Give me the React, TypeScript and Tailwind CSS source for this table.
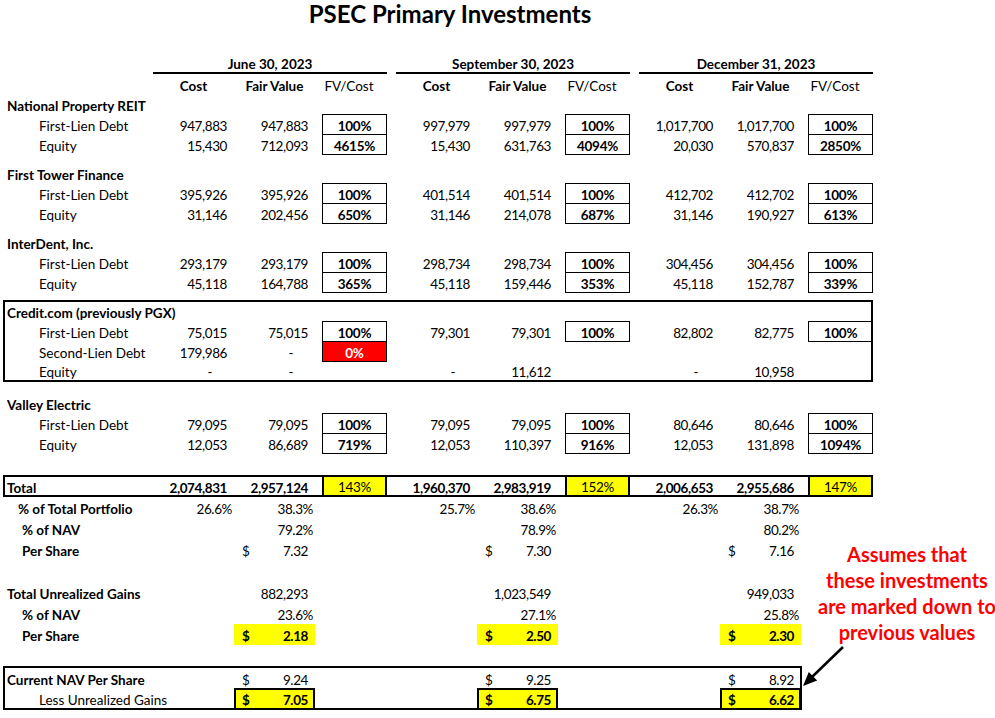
import React from "react";

type GroupData = {
  cost?: string;
  fv?: string;
  ratio?: string;
  red?: boolean;
};

const Sep = () => <div className="w-[9px] shrink-0" />;

function three(fn: (i: number) => React.ReactNode) {
  return (
    <>
      {fn(0)}
      <Sep />
      {fn(1)}
      <Sep />
      {fn(2)}
    </>
  );
}

const NumCell = ({ v, pct, bold }: { v?: string; pct?: boolean; bold?: boolean }) => {
  let pad = "pr-[7px]";
  if (v === "-") pad = "pr-[22px]";
  else if (pct) pad = "pr-[2px]";
  return (
    <div
      className={`w-[81px] shrink-0 flex items-center justify-end whitespace-nowrap pt-[4px] tracking-[-0.4px] ${pad} ${
        bold ? "font-bold" : ""
      }`}
    >
      {v}
    </div>
  );
};

const Ratio = ({ v, red }: { v?: string; red?: boolean }) => {
  if (!v) return <div className="w-[65px] shrink-0" />;
  return (
    <div
      className={`w-[65px] h-[21px] shrink-0 self-start border border-black flex items-center justify-center pt-[3px] font-bold tracking-[-0.3px] ${
        red ? "bg-[#ff0000] text-white" : ""
      }`}
    >
      {v}
    </div>
  );
};

const Gap = () => <div className="w-[7px] shrink-0" />;

const Label = ({
  children,
  pad,
  bold,
}: {
  children?: React.ReactNode;
  pad: string;
  bold?: boolean;
}) => (
  <div
    className={`w-[153px] shrink-0 flex items-center whitespace-nowrap pt-[4px] ${pad} ${
      bold ? "font-bold" : ""
    }`}
  >
    {children}
  </div>
);

const Heading = ({ text, h = "h-[20px]" }: { text: string; h?: string }) => (
  <div className={`flex ${h}`}>
    <Label pad="pl-[7px]" bold>
      {text}
    </Label>
  </div>
);

const DataRow = ({ label, g, h = "h-[20px]" }: { label: string; g: GroupData[]; h?: string }) => (
  <div className={`flex ${h}`}>
    <Label pad="pl-[39px]">{label}</Label>
    {three((i) => (
      <div key={i} className="flex w-[234px] shrink-0">
        <NumCell v={g[i].cost} />
        <NumCell v={g[i].fv} />
        <Gap />
        <Ratio v={g[i].ratio} red={g[i].red} />
      </div>
    ))}
  </div>
);

const PctRow = ({
  label,
  pad,
  vals,
}: {
  label: string;
  pad: string;
  vals: [string | undefined, string][];
}) => (
  <div className="flex h-[21px]">
    <Label pad={pad} bold>
      {label}
    </Label>
    {three((i) => (
      <div key={i} className="flex w-[234px] shrink-0">
        <NumCell v={vals[i][0]} pct />
        <NumCell v={vals[i][1]} pct />
      </div>
    ))}
  </div>
);

const DollarCell = ({
  v,
  variant,
}: {
  v: string;
  variant?: "plain" | "yellow" | "boxed";
}) => {
  if (variant === "yellow")
    return (
      <div className="w-[81px] shrink-0 flex items-center justify-between pt-[4px] pl-[8px] pr-[7px] bg-[#ffff00] font-bold tracking-[-0.4px]">
        <span>$</span>
        <span>{v}</span>
      </div>
    );
  if (variant === "boxed")
    return (
      <div className="w-[81px] h-[22px] shrink-0 self-start -mb-[2px] flex items-center justify-between pt-[3px] pl-[6px] pr-[5px] bg-[#ffff00] font-bold border-2 border-black tracking-[-0.4px]">
        <span>$</span>
        <span>{v}</span>
      </div>
    );
  return (
    <div className="w-[81px] shrink-0 flex items-center justify-between pt-[4px] pl-[8px] pr-[7px] tracking-[-0.4px]">
      <span>$</span>
      <span>{v}</span>
    </div>
  );
};

const DollarRow = ({
  label,
  pad,
  bold,
  vals,
  variant,
  h = "h-[21px]",
}: {
  label: string;
  pad: string;
  bold?: boolean;
  vals: string[];
  variant?: "plain" | "yellow" | "boxed";
  h?: string;
}) => (
  <div className={`flex ${h}`}>
    <Label pad={pad} bold={bold}>
      {label}
    </Label>
    {three((i) => (
      <div key={i} className="flex w-[234px] shrink-0">
        <div className="w-[81px] shrink-0" />
        <DollarCell v={vals[i]} variant={variant} />
      </div>
    ))}
  </div>
);

export default function App() {
  const npr: GroupData[][] = [
    [
      { cost: "947,883", fv: "947,883", ratio: "100%" },
      { cost: "997,979", fv: "997,979", ratio: "100%" },
      { cost: "1,017,700", fv: "1,017,700", ratio: "100%" },
    ],
    [
      { cost: "15,430", fv: "712,093", ratio: "4615%" },
      { cost: "15,430", fv: "631,763", ratio: "4094%" },
      { cost: "20,030", fv: "570,837", ratio: "2850%" },
    ],
  ];
  const ftf: GroupData[][] = [
    [
      { cost: "395,926", fv: "395,926", ratio: "100%" },
      { cost: "401,514", fv: "401,514", ratio: "100%" },
      { cost: "412,702", fv: "412,702", ratio: "100%" },
    ],
    [
      { cost: "31,146", fv: "202,456", ratio: "650%" },
      { cost: "31,146", fv: "214,078", ratio: "687%" },
      { cost: "31,146", fv: "190,927", ratio: "613%" },
    ],
  ];
  const idt: GroupData[][] = [
    [
      { cost: "293,179", fv: "293,179", ratio: "100%" },
      { cost: "298,734", fv: "298,734", ratio: "100%" },
      { cost: "304,456", fv: "304,456", ratio: "100%" },
    ],
    [
      { cost: "45,118", fv: "164,788", ratio: "365%" },
      { cost: "45,118", fv: "159,446", ratio: "353%" },
      { cost: "45,118", fv: "152,787", ratio: "339%" },
    ],
  ];
  const ve: GroupData[][] = [
    [
      { cost: "79,095", fv: "79,095", ratio: "100%" },
      { cost: "79,095", fv: "79,095", ratio: "100%" },
      { cost: "80,646", fv: "80,646", ratio: "100%" },
    ],
    [
      { cost: "12,053", fv: "86,689", ratio: "719%" },
      { cost: "12,053", fv: "110,397", ratio: "916%" },
      { cost: "12,053", fv: "131,898", ratio: "1094%" },
    ],
  ];
  const totals = [
    ["2,074,831", "2,957,124", "143%"],
    ["1,960,370", "2,983,919", "152%"],
    ["2,006,653", "2,955,686", "147%"],
  ];
  const dates = ["June 30, 2023", "September 30, 2023", "December 31, 2023"];

  return (
    <div className="relative w-[995px] h-[718px] bg-white text-black text-[13.5px] font-['Lato','Liberation_Sans',sans-serif] overflow-hidden">
      {/* Title */}
      <div className="h-[53px] w-[900px] text-center">
        <div className="text-[24px] leading-[28px] font-bold">PSEC Primary Investments</div>
      </div>

      {/* Date headers */}
      <div className="flex h-[21px]">
        <div className="w-[153px] shrink-0" />
        {three((i) => (
          <div
            key={i}
            className="w-[234px] shrink-0 border-b-2 border-black flex items-center justify-center pt-[3px] font-bold"
          >
            {dates[i]}
          </div>
        ))}
      </div>

      {/* Column headers */}
      <div className="flex h-[20px]">
        <div className="w-[153px] shrink-0" />
        {three((i) => (
          <div key={i} className="flex w-[234px] shrink-0">
            <div className="w-[81px] flex items-center justify-center pt-[4px] font-bold">Cost</div>
            <div className="w-[81px] flex items-center justify-center pt-[4px] font-bold">Fair Value</div>
            <div className="w-[72px] pr-[4px] flex items-center justify-center pt-[4px]">FV/Cost</div>
          </div>
        ))}
      </div>

      <Heading text="National Property REIT" />
      <DataRow label="First-Lien Debt" g={npr[0]} />
      <DataRow label="Equity" g={npr[1]} />
      <div className="h-[9px]" />

      <Heading text="First Tower Finance" />
      <DataRow label="First-Lien Debt" g={ftf[0]} />
      <DataRow label="Equity" g={ftf[1]} />
      <div className="h-[9px]" />

      <Heading text="InterDent, Inc." />
      <DataRow label="First-Lien Debt" g={idt[0]} />
      <DataRow label="Equity" g={idt[1]} />
      <div className="h-[8px]" />

      {/* Credit.com box */}
      <div className="ml-[3px] w-[870px] border-2 border-black">
        <div className="-ml-[5px] w-[873px]">
          <Heading text="Credit.com (previously PGX)" h="h-[19px]" />
          <DataRow
            label="First-Lien Debt"
            g={[
              { cost: "75,015", fv: "75,015", ratio: "100%" },
              { cost: "79,301", fv: "79,301", ratio: "100%" },
              { cost: "82,802", fv: "82,775", ratio: "100%" },
            ]}
          />
          <DataRow
            label="Second-Lien Debt"
            g={[{ cost: "179,986", fv: "-", ratio: "0%", red: true }, {}, {}]}
          />
          <DataRow
            label="Equity"
            h="h-[19px]"
            g={[
              { cost: "-", fv: "-" },
              { cost: "-", fv: "11,612" },
              { cost: "-", fv: "10,958" },
            ]}
          />
        </div>
      </div>
      <div className="h-[11px]" />

      <Heading text="Valley Electric" />
      <DataRow label="First-Lien Debt" g={ve[0]} />
      <DataRow label="Equity" g={ve[1]} />
      <div className="h-[22px]" />

      {/* Total box */}
      <div className="ml-[3px] w-[870px] border-2 border-black">
        <div className="-ml-[5px] w-[873px] flex h-[18px]">
          <Label pad="pl-[7px]" bold>
            Total
          </Label>
          {three((i) => (
            <div key={i} className="flex w-[234px] shrink-0">
              <NumCell v={totals[i][0]} bold />
              <NumCell v={totals[i][1]} bold />
              <Gap />
              <div className="w-[65px] h-[22px] -mt-[2px] shrink-0 border-2 border-black bg-[#ffff00] flex items-center justify-center pt-[3px] tracking-[-0.3px]">
                {totals[i][2]}
              </div>
            </div>
          ))}
        </div>
      </div>

      <PctRow
        label="% of Total Portfolio"
        pad="pl-[18px]"
        vals={[
          ["26.6%", "38.3%"],
          ["25.7%", "38.6%"],
          ["26.3%", "38.7%"],
        ]}
      />
      <PctRow
        label="% of NAV"
        pad="pl-[22px]"
        vals={[
          [undefined, "79.2%"],
          [undefined, "78.9%"],
          [undefined, "80.2%"],
        ]}
      />
      <DollarRow label="Per Share" pad="pl-[22px]" bold vals={["7.32", "7.30", "7.16"]} />
      <div className="h-[22px]" />

      <div className="flex h-[21px]">
        <Label pad="pl-[7px]" bold>
          Total Unrealized Gains
        </Label>
        {three((i) => (
          <div key={i} className="flex w-[234px] shrink-0">
            <div className="w-[81px] shrink-0" />
            <NumCell v={["882,293", "1,023,549", "949,033"][i]} />
          </div>
        ))}
      </div>
      <PctRow
        label="% of NAV"
        pad="pl-[22px]"
        vals={[
          [undefined, "23.6%"],
          [undefined, "27.1%"],
          [undefined, "25.8%"],
        ]}
      />
      <DollarRow
        label="Per Share"
        pad="pl-[22px]"
        bold
        variant="yellow"
        vals={["2.18", "2.50", "2.30"]}
      />
      <div className="h-[21px]" />

      {/* Current NAV box */}
      <div className="ml-[3px] w-[799px] border-2 border-black">
        <div className="-ml-[5px] w-[873px]">
          <DollarRow
            label="Current NAV Per Share"
            pad="pl-[7px]"
            bold
            h="h-[20px]"
            vals={["9.24", "9.25", "8.92"]}
          />
          <DollarRow
            label="Less Unrealized Gains"
            pad="pl-[39px]"
            h="h-[20px]"
            variant="boxed"
            vals={["7.05", "6.75", "6.62"]}
          />
        </div>
      </div>

      {/* Annotation */}
      <div className="absolute left-[812px] top-[541px] w-[190px] text-center text-[20px] leading-[26px] font-bold text-[#ff0000] whitespace-nowrap">
        <div>Assumes that</div>
        <div>these investments</div>
        <div>are marked down to</div>
        <div>previous values</div>
      </div>
      <svg
        className="absolute left-[795px] top-[640px]"
        width="56"
        height="56"
        viewBox="0 0 56 56"
      >
        <line x1="48" y1="7" x2="17" y2="37" stroke="black" strokeWidth="2.5" />
        <polygon points="8,46 22.2,40.5 13.8,31.9" fill="black" />
      </svg>
    </div>
  );
}
